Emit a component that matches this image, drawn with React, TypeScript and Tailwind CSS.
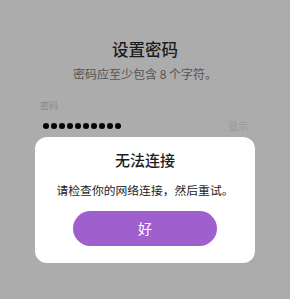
export default function App() {
  const font = { fontFamily: '"Noto Sans CJK SC", "Noto Sans", sans-serif' };
  return (
    <div
      className="relative w-[290px] h-[299px] overflow-hidden bg-[#acacac]"
      style={font}
    >
      {/* page behind the dialog */}
      <div className="flex flex-col items-center pt-[37px]">
        <h1 className="text-[16.5px] leading-[24px] font-medium text-[#1c1c1c]">设置密码</h1>
        <p className="mt-[4px] text-[12px] leading-[18px] text-[#555]">密码应至少包含 8 个字符。</p>
      </div>
      <div className="px-[40px] mt-[17px]">
        <div className="text-[9px] leading-[12px] text-[#888]">密码</div>
        <div className="mt-[8px] flex items-center justify-between">
          <div className="flex gap-[2px] pl-[3px]">
            {Array.from({ length: 10 }).map((_, i) => (
              <span key={i} className="w-[6px] h-[6px] rounded-full bg-black" />
            ))}
          </div>
          <span className="text-[10px] leading-[12px] text-[#999] mr-[2px]">显示</span>
        </div>
      </div>

      {/* dialog */}
      <div className="absolute left-[35px] top-[137px] w-[220px] h-[126px] rounded-[12px] bg-white flex flex-col items-center">
        <h2 className="mt-[13px] text-[15px] leading-[20px] font-medium text-[#1c1c1c]">无法连接</h2>
        <p className="mt-[12px] text-[11.8px] leading-[16px] text-[#222]">请检查你的网络连接，然后重试。</p>
        <button className="mt-[13px] w-[144px] h-[35px] rounded-full bg-[#9f5fcc] text-white text-[14px]">
          好
        </button>
      </div>
    </div>
  );
}
